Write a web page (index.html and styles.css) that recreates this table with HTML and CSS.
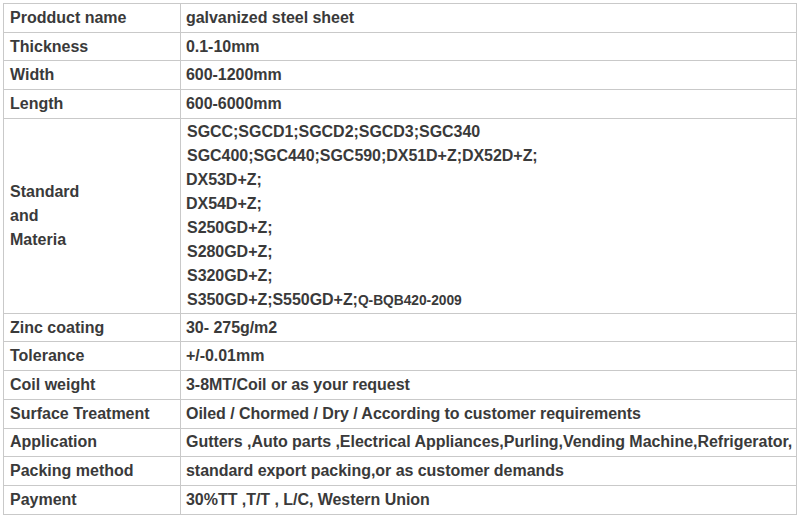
FILE: index.html
```html
<!DOCTYPE html>
<html>
<head>
<meta charset="utf-8">
<link rel="stylesheet" href="styles.css">
</head>
<body>
<table class="spec">
  <tbody>
    <tr><td class="k">Prodduct name</td><td class="v">galvanized steel sheet</td></tr>
    <tr><td class="k">Thickness</td><td class="v">0.1-10mm</td></tr>
    <tr><td class="k">Width</td><td class="v">600-1200mm</td></tr>
    <tr><td class="k">Length</td><td class="v">600-6000mm</td></tr>
    <tr class="tall">
      <td class="k">Standard<br>and<br>Materia</td>
      <td class="v list">
        <div class="ind">SGCC;SGCD1;SGCD2;SGCD3;SGC340</div>
        <div class="ind">SGC400;SGC440;SGC590;DX51D+Z;DX52D+Z;</div>
        <div>DX53D+Z;</div>
        <div>DX54D+Z;</div>
        <div class="ind">S250GD+Z;</div>
        <div class="ind">S280GD+Z;</div>
        <div class="ind">S320GD+Z;</div>
        <div class="ind">S350GD+Z;S550GD+Z;<span class="small">Q-BQB420-2009</span></div>
      </td>
    </tr>
    <tr><td class="k">Zinc coating</td><td class="v">30- 275g/m2</td></tr>
    <tr><td class="k">Tolerance</td><td class="v">+/-0.01mm</td></tr>
    <tr><td class="k">Coil weight</td><td class="v">3-8MT/Coil or as your request</td></tr>
    <tr><td class="k">Surface Treatment</td><td class="v">Oiled / Chormed / Dry / According to customer requirements</td></tr>
    <tr><td class="k">Application</td><td class="v">Gutters ,Auto parts ,Electrical Appliances,Purling,Vending Machine,Refrigerator,</td></tr>
    <tr><td class="k">Packing method</td><td class="v">standard export packing,or as customer demands</td></tr>
    <tr><td class="k">Payment</td><td class="v">30%TT ,T/T , L/C, Western Union</td></tr>
  </tbody>
</table>
</body>
</html>
```
FILE: styles.css
```css
html, body {
  margin: 0;
  padding: 0;
  background: #ffffff;
}
body {
  padding: 3px 0 0 3px;
  font-family: "Liberation Sans", Arial, sans-serif;
  color: #3a3a3a;
}
.spec {
  border-collapse: collapse;
  width: 794px;
  table-layout: fixed;
}
.spec td {
  border: 1px solid #c9c9c9;
  font-size: 16px;
  font-weight: bold;
  line-height: 20px;
  height: 28.7px;
  padding: 0 6px;
  vertical-align: middle;
  white-space: nowrap;
  box-sizing: border-box;
}
.spec td.k {
  width: 177px;
}
.spec td.v {
  padding-left: 5px;
  letter-spacing: -0.04px;
}
.spec tr.tall td {
  height: 194px;
  line-height: 24px;
}
.spec td.list {
  padding-top: 1px;
  padding-bottom: 0;
}
.ind {
  padding-left: 1px;
}
.small {
  font-size: 13.8px;
}
```
